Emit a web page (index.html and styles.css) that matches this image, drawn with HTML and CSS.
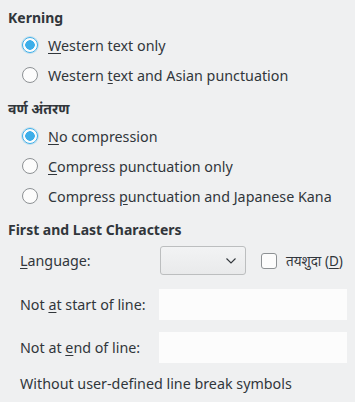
FILE: index.html
```html
<!DOCTYPE html>
<html>
<head>
<meta charset="utf-8">
<link rel="stylesheet" href="styles.css">
</head>
<body>
<div class="page">
  <section class="group">
    <div class="heading">Kerning</div>
    <div class="options">
      <div class="radio-row"><span class="radio checked"></span><span class="label"><u>W</u>estern text only</span></div>
      <div class="radio-row"><span class="radio"></span><span class="label">Western <u>t</u>ext and Asian punctuation</span></div>
    </div>
  </section>
  <section class="group">
    <div class="heading">वर्ण अंतरण</div>
    <div class="options">
      <div class="radio-row"><span class="radio checked"></span><span class="label"><u>N</u>o compression</span></div>
      <div class="radio-row"><span class="radio"></span><span class="label"><u>C</u>ompress punctuation only</span></div>
      <div class="radio-row"><span class="radio"></span><span class="label">Compress <u>p</u>unctuation and Japanese Kana</span></div>
    </div>
  </section>
  <section class="group last">
    <div class="heading">First and Last Characters</div>
    <div class="form">
      <div class="form-row lang-row">
        <span class="flabel"><u>L</u>anguage:</span>
        <div class="controls">
          <div class="combo"><svg class="chev" width="10" height="6" viewBox="0 0 10 6"><path d="M0.5 0.5 L5 5 L9.5 0.5" fill="none" stroke="#31363b" stroke-width="1.1"/></svg></div>
          <span class="checkbox"></span>
          <span class="cblabel">तयशुदा (<u>D</u>)</span>
        </div>
      </div>
      <div class="form-row field-row">
        <span class="flabel">Not <u>a</u>t start of line:</span>
        <div class="field"></div>
      </div>
      <div class="form-row field-row second">
        <span class="flabel">Not at <u>e</u>nd of line:</span>
        <div class="field"></div>
      </div>
      <div class="note">Without user-defined line break symbols</div>
    </div>
  </section>
</div>
</body>
</html>
```

FILE: styles.css
```css
html, body {
  margin: 0;
  padding: 0;
  background: #eff0f1;
}
body {
  font-family: "Noto Sans", "Open Sans", sans-serif;
  font-size: 14.3px;
  color: #31363b;
}
.page {
  padding: 6px 8px 0 8px;
  display: flex;
  flex-direction: column;
  gap: 7px;
}
.heading {
  font-weight: bold;
  font-size: 14px;
  height: 24px;
  line-height: 24px;
}
u {
  text-decoration: underline;
  text-underline-offset: 2px;
}
.options {
  display: flex;
  flex-direction: column;
}
.radio-row {
  height: 30px;
  display: flex;
  align-items: center;
  padding-left: 14px;
  gap: 10px;
}
.radio {
  width: 16px;
  height: 16px;
  box-sizing: border-box;
  border-radius: 50%;
  border: 1px solid #8d9194;
  background: #fcfcfc;
  flex: none;
}
.radio.checked {
  border-color: #3daee9;
  background: radial-gradient(circle, #3daee9 0 4.5px, #fcfcfc 5px);
  box-shadow: 0 0 0 1px rgba(61, 174, 233, 0.25);
}
.form {
  padding-left: 12px;
  display: flex;
  flex-direction: column;
}
.form-row {
  display: grid;
  grid-template-columns: 139px 1fr;
  align-items: center;
}
.lang-row {
  margin-top: 4px;
  height: 29px;
}
.controls {
  display: flex;
  align-items: center;
}
.combo {
  margin-left: 1px;
  width: 86px;
  height: 29px;
  box-sizing: border-box;
  border: 1px solid #bcbebf;
  border-radius: 3px;
  background: linear-gradient(#f2f3f4, #e9eaeb);
  display: flex;
  align-items: center;
  justify-content: flex-end;
  padding-right: 9px;
}
.chev {
  display: block;
}
.checkbox {
  margin-left: 15px;
  width: 16px;
  height: 16px;
  box-sizing: border-box;
  border: 1px solid #8d9194;
  border-radius: 3px;
  background: #fcfcfc;
}
.cblabel {
  margin-left: 9px;
  font-size: 13.5px;
}
.field-row {
  margin-top: 14px;
}
.field-row.second {
  margin-top: 12px;
}
.field {
  width: 188px;
  height: 31px;
  background: #fcfcfc;
}
.note {
  margin-top: 11px;
  height: 20px;
  line-height: 20px;
}
```
